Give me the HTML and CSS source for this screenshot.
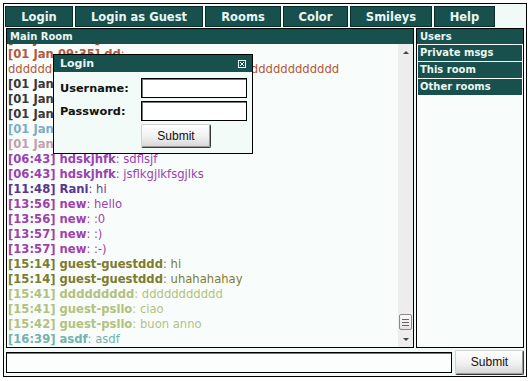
FILE: index.html
```html
<!DOCTYPE html>
<html lang="en">

<head>
    <meta charset="UTF-8">
    <title>Chat</title>
    <link rel="stylesheet" href="styles.css">
</head>

<body>

    <div class="app">

        <div class="tabs">
            <div class="tab t-login">Login</div>
            <div class="tab t-guest">Login as Guest</div>
            <div class="tab t-rooms">Rooms</div>
            <div class="tab t-color">Color</div>
            <div class="tab t-smileys">Smileys</div>
            <div class="tab t-help">Help</div>
        </div>

        <div class="main">
            <div class="room">
                <div class="room-head">Main Room</div>
                <div class="room-body">
                    <div class="messages">
                        <div class="msg c-sienna"><b>[01 Jan 09:30] dd</b>: hi</div>
                        <div class="msg c-sienna"><b>[01 Jan 09:35] dd</b>: ddddddddddddddddddddddddddddddddddddddddddddd</div>
                        <div class="msg c-dark"><b>[01 Jan 09:40] Rani</b>: ciao</div>
                        <div class="msg c-dark"><b>[01 Jan 09:41] Rani</b>: hi</div>
                        <div class="msg c-dark"><b>[01 Jan 09:44] Rani</b>: ok</div>
                        <div class="msg c-blue"><b>[01 Jan 10:02] bb</b>: hey</div>
                        <div class="msg c-pink"><b>[01 Jan 10:15] kk</b>: yo</div>
                        <div class="msg c-purple"><b>[06:43] hdskjhfk</b>: sdflsjf</div>
                        <div class="msg c-purple"><b>[06:43] hdskjhfk</b>: jsflkgjlkfsgjlks</div>
                        <div class="msg c-indigo"><b>[11:48] Rani</b>: hi</div>
                        <div class="msg c-magenta"><b>[13:56] new</b>: hello</div>
                        <div class="msg c-magenta"><b>[13:56] new</b>: :0</div>
                        <div class="msg c-magenta"><b>[13:57] new</b>: :)</div>
                        <div class="msg c-magenta"><b>[13:57] new</b>: :-)</div>
                        <div class="msg c-olive"><b>[15:14] guest-guestddd</b>: hi</div>
                        <div class="msg c-olive"><b>[15:14] guest-guestddd</b>: uhahahahay</div>
                        <div class="msg c-pale"><b>[15:41] ddddddddd</b>: ddddddddddd</div>
                        <div class="msg c-pale"><b>[15:41] guest-psllo</b>: ciao</div>
                        <div class="msg c-pale"><b>[15:42] guest-psllo</b>: buon anno</div>
                        <div class="msg c-teal"><b>[16:39] asdf</b>: asdf</div>
                    </div>
                    <div class="scrollbar">
                        <div class="arrow arrow-up"></div>
                        <div class="track"></div>
                        <div class="thumb"><span></span><span></span><span></span></div>
                        <div class="arrow arrow-down"></div>
                    </div>
                </div>
            </div>

            <div class="side">
                <div class="side-head">Users</div>
                <div class="side-item">Private msgs</div>
                <div class="side-item">This room</div>
                <div class="side-item">Other rooms</div>
            </div>
        </div>

        <div class="send">
            <input class="send-input" type="text">
            <button class="btn send-btn">Submit</button>
        </div>

        <div class="login-box">
            <div class="login-head">
                <span>Login</span>
                <svg class="close" width="8" height="8" viewBox="0 0 8 8">
                    <rect x="0.5" y="0.5" width="7" height="7" fill="none" stroke="#e6f3ef" stroke-width="1" />
                    <path d="M2 2 L6 6 M6 2 L2 6" stroke="#e6f3ef" stroke-width="1" />
                </svg>
            </div>
            <div class="login-body">
                <label>Username:</label>
                <input class="field" type="text">
                <label>Password:</label>
                <input class="field" type="password">
                <button class="btn login-btn">Submit</button>
            </div>
        </div>

    </div>

</body>

</html>
```

FILE: styles.css
```css
* {
    margin: 0;
    padding: 0;
    box-sizing: border-box;
}

body {
    background: #fff;
    font-family: "DejaVu Sans", Verdana, sans-serif;
}

.app {
    position: relative;
    margin: 3px 0 0 3px;
    width: 524px;
    height: 374px;
    border: 1px solid #000;
    background: #f1faf6;
}

/* top tabs */
.tabs {
    display: flex;
    gap: 2px;
    margin: 2px 0 0 1px;
    height: 21px;
}

.tab {
    border: 1px solid #0b2b29;
    background: #17504d;
    color: #eaf6f2;
    font-weight: bold;
    font-size: 11.5px;
    display: flex;
    align-items: center;
    justify-content: center;
}

.t-login { width: 68px; }
.t-guest { width: 128px; }
.t-rooms { width: 76px; }
.t-color { width: 65px; }
.t-smileys { width: 82px; }
.t-help { width: 61px; }

/* main row */
.main {
    display: flex;
    gap: 2px;
    margin: 1px 0 0 2px;
    height: 320px;
}

.room {
    width: 408px;
    border: 1px solid #000;
    display: flex;
    flex-direction: column;
    background: #f8fdfb;
}

.room-head,
.side-head {
    height: 15px;
    background: #17504d;
    color: #eaf6f2;
    font-weight: bold;
    font-size: 10px;
    line-height: 15px;
    padding-left: 3px;
}

.room-body {
    flex: 1;
    display: flex;
    min-height: 0;
}

.messages {
    flex: 1;
    overflow: hidden;
    display: flex;
    flex-direction: column;
    justify-content: flex-end;
    padding-left: 1px;
}

.msg {
    font-size: 11.6px;
    line-height: 15px;
    word-wrap: break-word;
}

.msg b {
    font-weight: bold;
}

.c-sienna { color: #b5583c; }
.c-dark { color: #383838; }
.c-blue { color: #7aaec6; }
.c-pink { color: #c4a0ac; }
.c-purple { color: #9a42b2; }
.c-indigo { color: #6a3a98; }
.c-magenta { color: #a040ac; }
.c-olive { color: #7e7b2e; }
.c-pale { color: #b3c17e; }
.c-teal { color: #72b2b0; }

.c-indigo b { color: #5a3590; }

/* fake scrollbar */
.scrollbar {
    width: 15px;
    background: #ededed;
    display: flex;
    flex-direction: column;
    align-items: center;
}

.arrow {
    height: 15px;
    width: 15px;
    position: relative;
}

.arrow::after {
    content: "";
    position: absolute;
    left: 5px;
    border-left: 3px solid transparent;
    border-right: 3px solid transparent;
}

.arrow-up::after {
    top: 7px;
    border-bottom: 3px solid #444;
}

.arrow-down::after {
    top: 6px;
    border-top: 3px solid #444;
}

.track {
    flex: 1;
}

.thumb {
    width: 13px;
    height: 16px;
    margin-bottom: 2px;
    border: 1px solid #8a8a8a;
    border-radius: 2px;
    background: linear-gradient(#fafafa, #e4e4e4);
    display: flex;
    flex-direction: column;
    justify-content: center;
    align-items: center;
    gap: 2px;
}

.thumb span {
    width: 7px;
    height: 1px;
    background: #666;
}

/* right panel */
.side {
    width: 108px;
    border: 1px solid #000;
    background: #f8fdfb;
}

.side-item {
    height: 16px;
    margin: 1px 1px 0;
    background: #17504d;
    color: #eaf6f2;
    font-weight: bold;
    font-size: 10px;
    line-height: 16px;
    padding-left: 2px;
}

/* bottom send row */
.send {
    display: flex;
    align-items: center;
    gap: 3px;
    margin: 1px 0 0 2px;
    height: 26px;
}

.send-input {
    width: 446px;
    height: 21px;
    border: 1px solid #000;
    box-shadow: inset 0 1px 0 #777;
    background: #fbfefd;
    outline: none;
}

.btn {
    font-family: "Liberation Sans", Arial, sans-serif;
    font-size: 12px;
    color: #111;
    background: linear-gradient(#ffffff, #f0f0f0 55%, #d6d6d6);
    border: 1px solid;
    border-color: #d0d0d0 #3a3a3a #3a3a3a #d0d0d0;
    border-radius: 2px;
    box-shadow: inset -1px -1px 0 #9a9a9a;
}

.send-btn {
    width: 69px;
    height: 25px;
}

/* login dialog */
.login-box {
    position: absolute;
    left: 49px;
    top: 50px;
    width: 200px;
    height: 100px;
    border: 1px solid #000;
    background: #f3fbf8;
}

.login-head {
    height: 17px;
    background: #17504d;
    color: #eaf6f2;
    font-weight: bold;
    font-size: 11px;
    display: flex;
    align-items: center;
    justify-content: space-between;
    padding: 0 6px 0 6px;
}

.close {
    display: block;
}

.login-body {
    display: grid;
    grid-template-columns: 81px 106px;
    row-gap: 3px;
    align-items: center;
    padding: 6px 0 0 6px;
}

.login-body label {
    font-weight: bold;
    font-size: 11.3px;
    color: #111;
}

.field {
    height: 20px;
    border: 1px solid #000;
    box-shadow: inset 1px 1px 0 #777;
    background: #fff;
    outline: none;
}

.login-btn {
    grid-column: 2;
    width: 70px;
    height: 24px;
}
```
